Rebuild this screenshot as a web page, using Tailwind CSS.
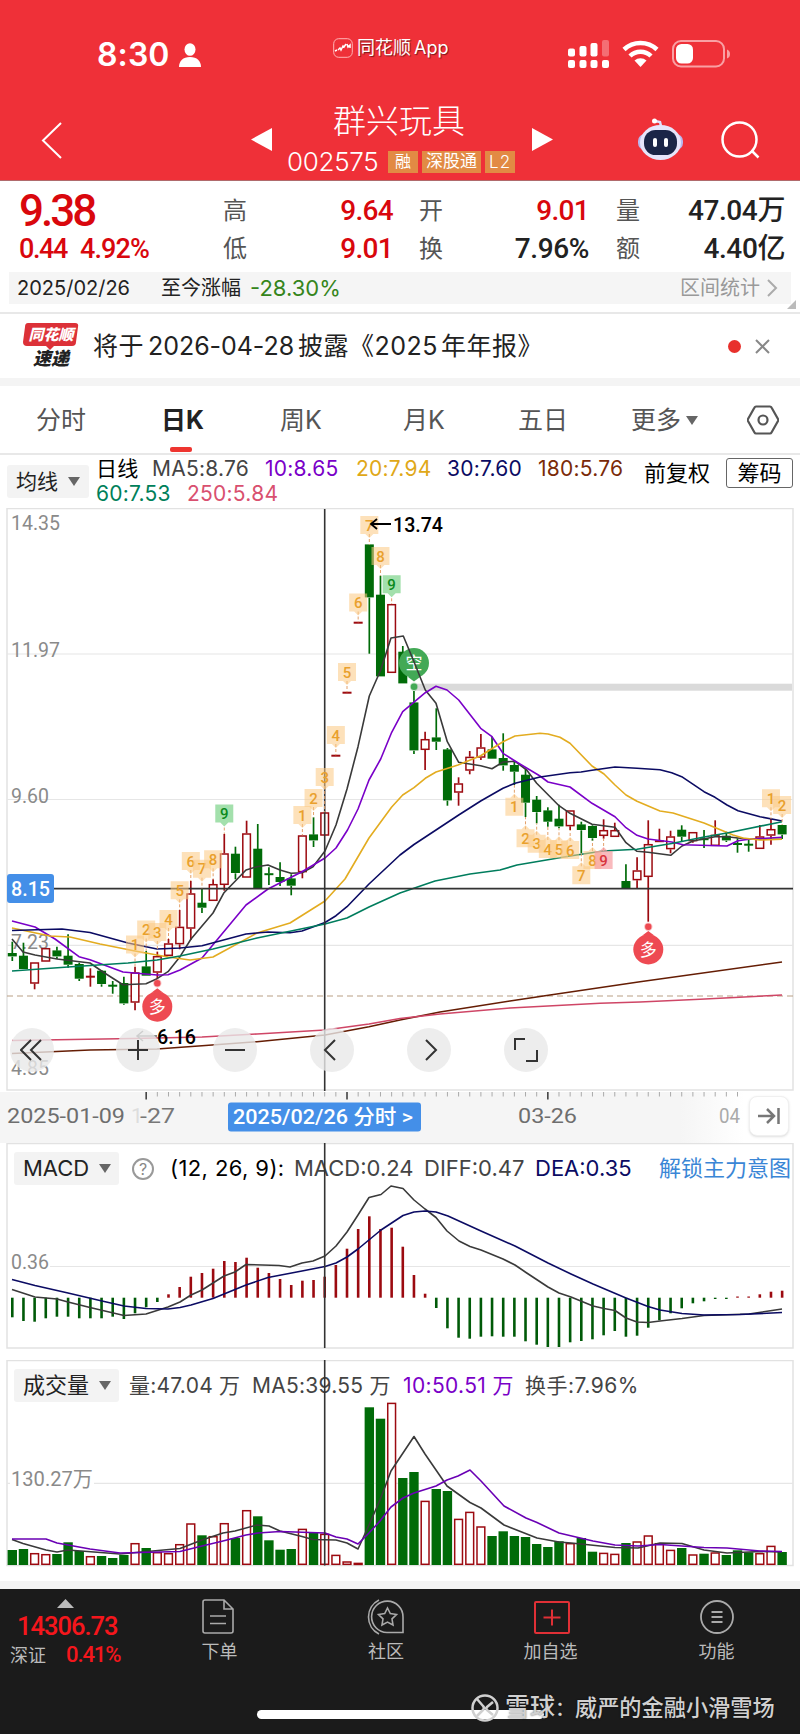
<!doctype html>
<html lang="zh-CN">
    <head>
        <meta charset="UTF-8" />
        <meta name="viewport" content="width=device-width, initial-scale=1.0" />
        <title>群兴玩具 002575</title>
        <script src="https://cdn.jsdelivr.net/npm/@tailwindcss/browser@4"></script>
    </head>
    <body class="w-[800px] h-[1734px] overflow-hidden bg-white text-[#222] font-['Inter','Noto_Sans_CJK_SC',sans-serif] whitespace-nowrap">
        <header class="h-[181px] bg-[#ef3038] text-white border-b border-[#b06a6c]">
            <!-- Status bar -->
            <div class="h-[94px] flex items-start pl-[97px] pt-[36px]">
                <span class="w-[72px] mt-px text-[32px] leading-9 font-semibold tracking-[0.1px]">8:30</span>
                <svg class="ml-[10px] mt-[7px] w-[22px] h-[25px]" viewBox="0 0 22 25" fill="currentColor">
                    <ellipse cx="11" cy="6.5" rx="5.5" ry="6.3" />
                    <path d="M0 24c0-6 4-10 11-10s11 4 11 10z" />
                </svg>
                <div class="ml-[132px] w-[235px] flex items-center gap-1 h-[22px] mt-px">
                    <svg class="w-5 h-5" viewBox="0 0 20 20" fill="none" stroke="currentColor">
                        <rect x=".7" y=".7" width="18.6" height="18.6" rx="5" stroke="#ffb3b5" />
                        <path d="M2 13l2-1M5 12l2-2 1 2 2-4 1 1 2-3M14 6l1 3 2-2v3" stroke-width="1.5" />
                    </svg>
                    <span class="flex gap-[3px] text-[18px] leading-[22px] [text-shadow:1px_1px_1px_rgba(0,0,0,0.5)]"><span>同花顺</span><span>App</span></span>
                </div>
                <svg class="mt-1 w-[42px] h-[29px]" viewBox="0 0 42 29" fill="currentColor">
                    <rect x="0" y="8.500" width="7" height="8" rx="2" />
                    <rect x="11.500" y="6" width="7" height="10.500" rx="2" />
                    <rect x="22.500" y="3" width="7" height="13.500" rx="2" />
                    <rect x="34" y="0" width="7" height="16.500" rx="2" opacity=".3" />
                    <rect x="0" y="20" width="7" height="8" rx="2" />
                    <rect x="11.500" y="20" width="7" height="8" rx="2" />
                    <rect x="22.500" y="20" width="7" height="8" rx="2" />
                    <rect x="34" y="20" width="7" height="8" rx="2" />
                </svg>
                <svg class="ml-3 mt-1 w-[37px] h-[27px]" viewBox="0 0 37 27" fill="none" stroke="currentColor" stroke-width="4.500">
                    <path d="M2 9.500a24 24 0 0 1 33 0" />
                    <path d="M8 16a15 15 0 0 1 21 0" />
                    <path d="M18.500 27l-6-6.500a9 9 0 0 1 12 0z" fill="currentColor" stroke="none" />
                </svg>
                <svg class="ml-[13px] mt-1 w-[59px] h-[28px]" viewBox="0 0 59 28" fill="none">
                    <rect x="1" y="1" width="51" height="25.500" rx="8" stroke="#f9a0a4" stroke-width="2" />
                    <rect x="4" y="4" width="17" height="19.500" rx="5.500" fill="#fff" />
                    <path d="M55 9.500q3 1 3 4.500t-3 4.500z" fill="#f9a0a4" />
                </svg>
            </div>
            <!-- Title bar -->
            <div class="flex items-start pl-[41px]">
                <svg class="mt-[28px] w-[21px] h-[37px]" viewBox="0 0 21 37" fill="none" stroke="currentColor" stroke-width="2">
                    <path d="M20 1L2 18.500 20 36" />
                </svg>
                <svg class="ml-[189px] mt-[34px] w-[21px] h-[23px]" viewBox="0 0 21 23" fill="currentColor"><path d="M21 0v23L0 11.500z" /></svg>
                <div class="ml-[13px] w-[230px] flex flex-col">
                    <h1 class="ml-[48px] mt-[6px] text-[33px] leading-[42px] font-light">群兴玩具</h1>
                    <div class="ml-[2px] mt-[7px] flex items-center h-[26px] gap-1">
                        <span class="w-[98px] text-[26px] leading-[26px] font-light tracking-[-0.3px]">002575</span>
                        <span class="w-[30px] h-[22px] bg-[#e28a44] text-center text-[16px] leading-[21px]">融</span>
                        <span class="w-[60px] h-[22px] bg-[#e28a44] text-center text-[17px] leading-[21px]">深股通</span>
                        <span class="w-[30px] h-[22px] bg-[#e28a44] text-center text-[17px] leading-[22px] font-light tracking-[1px]">L2</span>
                    </div>
                </div>
                <svg class="ml-[17px] mt-[34px] w-[21px] h-[23px]" viewBox="0 0 21 23" fill="currentColor"><path d="M0 0v23l21-11.500z" /></svg>
                <svg class="ml-[85px] mt-[24px] w-[45px] h-[43px]" viewBox="0 0 45 43">
                    <path d="M23 8l-1-4-5-1" stroke="#dfe0ff" stroke-width="2.500" fill="none" />
                    <circle cx="16.500" cy="3" r="2.500" fill="#fff" />
                    <rect x="0" y="16" width="45" height="16" rx="7" fill="#b9b8ee" />
                    <ellipse cx="22.500" cy="24.500" rx="20.500" ry="17.500" fill="#e6e5fb" />
                    <rect x="6" y="12" width="33" height="25" rx="11.500" fill="#1b2547" />
                    <rect x="15" y="20" width="4" height="9" rx="2" fill="#fff" />
                    <rect x="26" y="20" width="4" height="9" rx="2" fill="#fff" />
                </svg>
                <svg class="ml-[38px] mt-[27px] w-[39px] h-[38px]" viewBox="0 0 39 38" fill="none" stroke="currentColor" stroke-width="2.500">
                    <circle cx="18.500" cy="18.500" r="17" />
                    <path d="M30.500 29.500l7 7" />
                </svg>
            </div>
        </header>

        <!-- Quote -->
        <section class="h-[91px] flex text-[24px] leading-[38px] pt-[11px]">
            <div class="w-[203px] pl-[19px] -mt-[4px] text-[#d9070d] font-['Roboto'] font-medium">
                <div class="text-[44px] leading-[46px] tracking-[-3px]">9.38</div>
                <div class="flex text-[27px] leading-[30px] tracking-[-0.9px]"><span class="w-[61px] tracking-[-1.4px]">0.44</span><span>4.92%</span></div>
            </div>
            <div class="w-[190px] pl-[20px] text-[#555]">
                <div class="flex justify-between"><span>高</span><b class="text-[#d9070d] font-['Roboto'] text-[28px] font-medium tracking-[-0.7px]">9.64</b></div>
                <div class="flex justify-between"><span>低</span><b class="text-[#d9070d] font-['Roboto'] text-[28px] font-medium tracking-[-0.7px]">9.01</b></div>
            </div>
            <div class="w-[196px] pl-[26px] text-[#555]">
                <div class="flex justify-between"><span>开</span><b class="text-[#d9070d] font-['Roboto'] text-[28px] font-medium tracking-[-0.7px]">9.01</b></div>
                <div class="flex justify-between"><span>换</span><b class="text-[#222] font-['Roboto'] text-[28px] font-medium tracking-[-0.4px]">7.96%</b></div>
            </div>
            <div class="w-[196px] pl-[27px] text-[#555]">
                <div class="flex justify-between"><span>量</span><b class="text-[#222] font-['Roboto','Noto_Sans_CJK_SC'] text-[28px] font-medium tracking-[-0.4px]">47.04万</b></div>
                <div class="flex justify-between"><span>额</span><b class="text-[#222] font-['Roboto','Noto_Sans_CJK_SC'] text-[28px] font-medium tracking-[-0.4px]">4.40亿</b></div>
            </div>
        </section>
        <div class="relative h-[42px] px-[9px] border-b-2 border-[#e8e8e8]">
            <div class="h-8 bg-[#f5f5f5] flex items-center pl-[8px] pr-[13px] text-[20px] leading-8">
                <span class="w-[144px] text-[20px]">2025/02/26</span>
                <span class="w-[89px]">至今涨幅</span>
                <span class="text-[#35851c] text-[22px]">-28.30%</span>
                <span class="ml-auto text-[#999]">区间统计</span>
                <svg class="ml-[7px] w-[11px] h-[18px]" viewBox="0 0 11 18" fill="none" stroke="#aaa" stroke-width="2"><path d="M1 1l8 8-8 8" /></svg>
            </div>
            <svg class="absolute right-1 top-[28px] w-[9px] h-[9px]" viewBox="0 0 9 9" fill="#bbb"><path d="M9 0v9H0z" /></svg>
        </div>

        <!-- News -->
        <section class="h-[64px] flex items-center pl-[23px]">
            <div class="w-[56px] h-[46px] relative italic font-black text-center">
                <svg class="absolute inset-0 w-[56px] h-[28px]" viewBox="0 0 56 28" fill="#dc3138"><path d="M5 0h47q4 0 3 4l-2 15q0 4-4 4H31l-4 4-4-4H4q-4 0-4-4l2-15q0-4 3-4z" /></svg>
                <div class="relative text-white text-[15px] leading-[23px]">同花顺</div>
                <div class="relative text-[#222] text-[18px] leading-[26px]">速递</div>
            </div>
            <p class="ml-[14px] text-[25px] leading-9 tracking-[0.5px]">将于<span class="mx-1 tracking-[-0.05px]">2026-04-28</span>披露《2025<span class="ml-[3px]">年年报》</span></p>
            <i class="ml-auto w-[13px] h-[13px] rounded-full bg-[#e8302c]"></i>
            <svg class="ml-[14px] mr-[30px] w-[15px] h-[15px]" viewBox="0 0 15 15" stroke="#888" stroke-width="2"><path d="M1 1l13 13M14 1L1 14" /></svg>
        </section>
        <div class="h-2 bg-[#f4f4f4]"></div>

        <!-- Period tabs -->
        <nav class="h-[69px] flex text-[25px] leading-[69px] text-[#555] border-b-2 border-[#e8e8e8] pl-[36px]">
            <span class="w-[125px]">分时</span>
            <span class="relative w-[119px] font-bold text-[#222]">日K<i class="absolute left-[9px] bottom-px w-[22px] h-[5px] rounded-[2px] bg-[#ee3530]"></i></span>
            <span class="w-[123px]">周K</span>
            <span class="w-[115px]">月K</span>
            <span class="w-[113px]">五日</span>
            <span class="w-[55px]">更多</span>
            <svg class="mt-[30px] w-[12px] h-[9px]" viewBox="0 0 12 9" fill="#666"><path d="M0 0h12L6 9z" /></svg>
            <svg class="ml-[49px] mt-[19px] w-[32px] h-[30px]" viewBox="0 0 32 30" fill="none" stroke="#555" stroke-width="2.200">
                <path d="M9 1.500h14q1 0 1.500 1L31 14q.5 1 0 2l-6.500 11.500q-.5 1-1.500 1H9q-1 0-1.500-1L1 16q-.5-1 0-2L7.500 2.500q.5-1 1.500-1z" />
                <circle cx="16" cy="15" r="4.500" />
            </svg>
        </nav>

        <!-- MA legend -->
        <section class="h-[53px] flex pl-[7px] text-[21px] leading-[25px]">
            <div class="mt-[10px] w-[82px] h-[33px] bg-[#f3f3f3] rounded-[3px] flex items-center pl-[9px] text-[21px]">
                均线<svg class="ml-[10px] w-[12px] h-[9px]" viewBox="0 0 12 9" fill="#666"><path d="M0 0h12L6 9z" /></svg>
            </div>
            <div class="ml-[7px] w-[548px] mt-[1px] tracking-[0.25px]">
                <div class="flex">
                    <span class="w-[56px] text-black">日线</span>
                    <span class="w-[113px] text-[#444]">MA5:8.76</span>
                    <span class="w-[91px] text-[#7a00c8]">10:8.65</span>
                    <span class="w-[91px] text-[#e0a818]">20:7.94</span>
                    <span class="w-[91px] text-[#0b0b63]">30:7.60</span>
                    <span class="text-[#7a2a08]">180:5.76</span>
                </div>
                <div class="flex">
                    <span class="w-[91px] text-[#00805a]">60:7.53</span>
                    <span class="text-[#d9506f]">250:5.84</span>
                </div>
            </div>
            <span class="mt-[6px] text-[22px] text-black">前复权</span>
            <span class="ml-auto mr-[7px] mt-[3px] w-[67px] h-[30px] border border-[#666] rounded-[3px] text-center text-[22px] leading-[28px] text-black">筹码</span>
        </section>

        <!-- K line -->
        <section class="relative h-[584px]">
            <svg id="kline" class="block w-[800px] h-[584px]" viewBox="0 508 800 584" font-family="Roboto, 'Noto Sans CJK SC', sans-serif"></svg>
            <div class="absolute left-[10px] top-[520px] flex gap-[53px]">
                <button class="mr-[9px] size-11 rounded-full bg-[#e8e8e8]/80 flex items-center justify-center">
                    <svg class="size-6" viewBox="0 0 24 24" fill="none" stroke="#333" stroke-width="2"><path d="M11 2L1 12l10 10M21 2L11 12l10 10" /></svg>
                </button>
                <button class="size-11 rounded-full bg-[#e8e8e8]/80 flex items-center justify-center">
                    <svg class="size-6" viewBox="0 0 24 24" fill="none" stroke="#333" stroke-width="2"><path d="M12 2v20M2 12h20" /></svg>
                </button>
                <button class="size-11 rounded-full bg-[#e8e8e8]/80 flex items-center justify-center">
                    <svg class="size-6" viewBox="0 0 24 24" fill="none" stroke="#333" stroke-width="2"><path d="M2 12h20" /></svg>
                </button>
                <button class="size-11 rounded-full bg-[#e8e8e8]/80 flex items-center justify-center">
                    <svg class="size-6" viewBox="0 0 24 24" fill="none" stroke="#333" stroke-width="2"><path d="M15 2L5 12l10 10" /></svg>
                </button>
                <button class="size-11 rounded-full bg-[#e8e8e8]/80 flex items-center justify-center">
                    <svg class="size-6" viewBox="0 0 24 24" fill="none" stroke="#333" stroke-width="2"><path d="M9 2l10 10L9 22" /></svg>
                </button>
                <button class="size-11 rounded-full bg-[#e8e8e8]/80 flex items-center justify-center">
                    <svg class="size-6" viewBox="0 0 24 24" fill="none" stroke="#333" stroke-width="2"><path d="M1 12V1h10M23 12v11H12" /></svg>
                </button>
            </div>
        </section>

        <!-- Date axis -->
        <section class="relative h-[51px]">
            <svg id="axis" class="block w-[800px] h-[51px]" viewBox="0 1092 800 51" font-family="Roboto, 'Noto Sans CJK SC', sans-serif"></svg>
            <button class="absolute left-[749px] top-[4px] w-[40px] h-[40px] bg-white rounded-lg border border-[#f0f0f0] shadow-sm flex items-center justify-center">
                <svg class="w-[22px] h-[18px]" viewBox="0 0 22 18" fill="none" stroke="#777" stroke-width="2.500"><path d="M0 9h16M9 2l7 7-7 7M20.500 1v16" /></svg>
            </button>
        </section>

        <!-- MACD -->
        <section class="relative h-[217px]">
            <div class="absolute left-0 top-0 flex items-center pl-[14px] pt-[9px] text-[22px] leading-[33px]">
                <div class="w-[105px] h-[33px] bg-[#f3f3f3] rounded-[3px] flex items-center pl-[9px] text-[22px]">
                    MACD<svg class="ml-[10px] w-[12px] h-[9px]" viewBox="0 0 12 9" fill="#666"><path d="M0 0h12L6 9z" /></svg>
                </div>
                <i class="ml-[13px] w-[22px] h-[22px] rounded-full border-2 border-[#999] not-italic text-center text-[16px] leading-[18px] text-[#888]">?</i>
                <span class="ml-[16px] w-[124px] text-black tracking-[0.4px]">(12, 26, 9):</span>
                <span class="w-[130px] text-[#444]">MACD:0.24</span>
                <span class="w-[111px] text-[#444]">DIFF:0.47</span>
                <span class="w-[124px] text-[#0b0b63]">DEA:0.35</span>
                <span class="text-[#3a86d6]">解锁主力意图</span>
            </div>
            <svg id="macd" class="relative block w-[800px] h-[217px]" viewBox="0 1143 800 217" font-family="Roboto, sans-serif"></svg>
        </section>

        <!-- Volume -->
        <section class="relative h-[221px]">
            <div class="absolute left-0 top-0 flex items-center pl-[14px] pt-[9px] text-[21px] leading-[33px] text-[#444]">
                <div class="w-[105px] h-[33px] bg-[#f3f3f3] rounded-[3px] flex items-center pl-[9px] text-[22px] text-[#222]">
                    成交量<svg class="ml-[10px] w-[12px] h-[9px]" viewBox="0 0 12 9" fill="#666"><path d="M0 0h12L6 9z" /></svg>
                </div>
                <span class="ml-[10px] w-[123px] tracking-[0.25px]">量:47.04 万</span>
                <span class="w-[151px] tracking-[0.25px]">MA5:39.55 万</span>
                <span class="w-[122px] tracking-[0.35px] text-[#7a00c8]">10:50.51 万</span>
                <span class="tracking-[0.5px]">换手:7.96%</span>
            </div>
            <svg id="volume" class="relative block w-[800px] h-[221px]" viewBox="0 1360 800 221" font-family="Roboto, 'Noto Sans CJK SC', sans-serif"></svg>
        </section>
        <div class="h-2 bg-[#f4f4f4]"></div>

        <!-- Tab bar -->
        <footer class="relative h-[145px] bg-[#1b1b1b] text-[#bbb] text-[18px] leading-6">
            <div class="flex h-[90px]">
                <div class="w-[137px] pt-[10px]">
                    <svg class="ml-[57px] w-[17px] h-[9px]" viewBox="0 0 17 9" fill="#bbb"><path d="M8.500 0L17 9H0z" /></svg>
                    <div class="ml-[17px] mt-[4px] font-['Roboto'] font-medium text-[25.500px] leading-[29px] text-[#f5161c] tracking-[-1px]">14306.73</div>
                    <div class="ml-[10px] flex"><span class="w-[56px] mt-[3px]">深证</span><span class="mt-[2px] font-['Roboto'] font-medium text-[22px] text-[#f5161c] tracking-[-1.1px]">0.41%</span></div>
                </div>
                <div class="w-[162px] flex flex-col items-center pt-[10px]">
                    <svg class="w-[32px] h-[35px]" viewBox="0 0 32 35" fill="none" stroke="#aaa" stroke-width="1.600"><path d="M22 1H3q-2 0-2 2v29q0 2 2 2h26q2 0 2-2V10zM22 1v9h9M8 17h16M8 24.500h16" /></svg>
                    <span class="mt-[6px] ml-[3px]">下单</span>
                </div>
                <div class="w-[172px] flex flex-col items-center pt-[10px]">
                    <svg class="w-[40px] h-[36px]" viewBox="0 0 40 36" fill="none" stroke="#aaa" stroke-width="1.600">
                        <path d="M38 33.500H22a15.700 15.700 0 1 1 16-15.500zM14 1a19 19 0 0 0 0 34" />
                        <path d="M22.500 9l2.800 5.600 6.200.9-4.500 4.400 1 6.100-5.500-2.900-5.500 2.900 1-6.100-4.500-4.400 6.200-.9z" />
                    </svg>
                    <span class="mt-[5px] ml-[2px]">社区</span>
                </div>
                <div class="w-[162px] flex flex-col items-center pt-[11px]">
                    <svg class="w-[36px] h-[34px]" viewBox="0 0 36 34" fill="none" stroke="#e03036" stroke-width="2"><rect x="1" y="2" width="34" height="31" rx="1" /><path d="M18 9.500v16M9.500 17.500h17" /></svg>
                    <span class="mt-[6px] -ml-[3px]">加自选</span>
                </div>
                <div class="w-[167px] flex flex-col items-center pt-[10px]">
                    <svg class="w-[36px] h-[36px]" viewBox="0 0 36 36" fill="none" stroke="#aaa" stroke-width="1.800"><circle cx="18" cy="18" r="16" /><path d="M12.500 13h11M12.500 18h11M12.500 23h11" /></svg>
                    <span class="mt-[5px]">功能</span>
                </div>
            </div>
            <i class="absolute left-[257px] top-[121px] w-[287px] h-[9px] rounded-full bg-white"></i>
            <div class="absolute left-[471px] top-[104px] flex items-center text-[22.200px] leading-[28px] font-medium text-[#d0d0d0] [text-shadow:0_0_2px_rgba(0,0,0,0.6)]">
                <svg class="w-[28px] h-[28px] mr-[6px]" viewBox="0 0 28 28" fill="none" stroke="#d0d0d0" stroke-width="2.500"><circle cx="14" cy="14" r="12.500" /><path d="M6 5l6 7q2 2 0 4l-6 6M22 8l-6 5q-1.500 1.500 0 3l6 5" /></svg>
                <span class="w-[70px] text-[25px]">雪球<span class="text-[20px]">：</span></span><span>威严的金融小滑雪场</span>
            </div>
        </footer>

        <script>
            const X0 = 12.3;
            const STEP = 11.157;
            const RED = '#9c0a10';
            const GREEN = '#006b08';
            const x = (i) => X0 + i * STEP;

            // r/g, high, body top, body bottom, low
            const candles = [
                ['g', 941.7, 953.3, 956.7, 961], ['g', 942.7, 956, 969.3, 969.3], ['r', 962.3, 962.3, 983.7, 989.3], ['r', 948, 948, 961.7, 961.7],
                ['g', 946.7, 950.7, 956.7, 959], ['g', 934.3, 956, 965, 967.7], ['g', 962.7, 964.3, 979, 981], ['r', 968.3, 976, 976.7, 986.7],
                ['g', 970, 971, 984.3, 986.7], ['g', 981, 985, 986, 993.7], ['g', 976.7, 983.3, 1003.7, 1004.7], ['r', 966.7, 972.3, 1002.7, 1010.3],
                ['g', 951, 966.7, 976, 976], ['r', 951.7, 956, 972.7, 978.7], ['r', 939, 943.3, 956, 956], ['r', 910, 926.7, 944.3, 949.3],
                ['r', 881, 893.3, 928.7, 940], ['g', 888.3, 903, 908, 913], ['r', 879.3, 884, 901, 901], ['r', 834, 853.3, 885, 890.7],
                ['g', 846.7, 854, 873.3, 879.3], ['r', 820.7, 833.3, 877.7, 877.7], ['g', 824, 849, 889.3, 889.3], ['g', 867.3, 873.5, 875, 885],
                ['g', 862.3, 877.3, 882.3, 886], ['g', 874.3, 878.7, 886, 895.3], ['r', 835.3, 835.3, 872.3, 878.3], ['g', 817.3, 834.7, 840.7, 847],
                ['r', 812.3, 812.3, 835.7, 835.7], ['r', 755.3, 755, 756, 755.3], ['r', 692.3, 692, 693, 692.3], ['r', 622.3, 622, 623, 622.3],
                ['g', 544.7, 544.7, 597.7, 653.7], ['g', 575.7, 595, 676.7, 676.7], ['r', 604, 604, 673, 673], ['g', 646, 652, 683.7, 683.7],
                ['g', 691, 702.7, 750.7, 754], ['r', 731.7, 739, 750, 770], ['g', 708.3, 737.7, 742, 750], ['g', 748, 749.7, 800.7, 805.7],
                ['r', 777.3, 783.3, 792.7, 805.7], ['r', 751, 756.7, 770.7, 774.3], ['r', 734, 747.3, 757.7, 760], ['g', 736.7, 749.7, 759, 759],
                ['g', 733.3, 758.3, 765.7, 770.7], ['g', 760.7, 765.3, 772, 785], ['g', 769.3, 775, 803, 817], ['g', 796, 800, 812.3, 823.3],
                ['g', 807.3, 810.7, 822, 826.7], ['g', 804.7, 819, 826.7, 828.3], ['r', 810.3, 810.3, 826.3, 830], ['g', 821.7, 824.7, 830.3, 853.3],
                ['g', 825.3, 826.3, 838.3, 840.7], ['r', 819.3, 830, 836, 838.7], ['r', 822.7, 830, 837, 837], ['g', 864.3, 881.3, 888.3, 888.3],
                ['r', 857.3, 870.3, 880.3, 888.3], ['r', 820.3, 844, 877, 921.7], ['r', 828.7, 840.5, 841.5, 841.3], ['r', 830.7, 836.3, 849.3, 853.3],
                ['g', 825.3, 830, 837, 842], ['r', 832, 832, 841.3, 842.7], ['g', 830, 838.5, 840, 848], ['r', 820.3, 834.7, 846, 846],
                ['g', 831.7, 836, 840.7, 842], ['g', 838.3, 843.3, 844, 852.7], ['g', 838.3, 844, 845.3, 851.7], ['r', 825, 836.3, 849, 849],
                ['r', 819, 829, 835.7, 844.7], ['g', 825, 825.3, 834.7, 839],
            ];

            const maLines = [
                ['#3a3a3a', '12,939 23,952 35,955 57,959 90,963 103,972 123,984.700 146,983.700 157,978.700 168,971.700 180,956.700 191,939 213,913 224,892.700 246,870 257,866.700 268,865 280,870 291,873.300 302,872.700 313,866.700 325,851 336,825 347,789 358,746.700 369.300,696 380.700,670 391,638 403.300,636 414,661.700 425.300,690 436,703.300 447.300,741.700 458.700,762.300 480.700,765.700 492,768.700 503,762 515,761.300 526.700,770 536.700,783.300 559,805.700 570,813.300 592,824.300 615,827.300 626,842.700 637,851.300 648,852.300 670.700,855.300 682,846 693,841 715,836.700 727,836.700 749,839.300 782,839.300'],
                ['#7a00c8', '12,921 35,927 55,939 79,956.700 90,959.700 123,972 157,975 168,974.700 180,970 202,958 246,905 268,889 302,871.700 325,858 336,848 347.500,830 358,809 369,780 380.700,759 391.700,732.300 402.700,711.700 425.300,692.700 436,686.300 447,690 458.700,700 480.700,728.300 492,736.700 503,753.300 515,761 540,776 548,782 570,787 592,803.300 615,816.700 626,827.700 637,835.300 648,839 671.700,842 683,844.700 727,846 738,840.700 749,839.300 782,837.300'],
                ['#e3ac20', '12,928 50,936 70,937 100,944 135,951 168,957 190,960 213,957 257,933 290,923 325,901 345,879 369,838 391.700,807 402.700,795 414,787.700 425.300,778.300 436,772 458,765 480.700,755.700 503,741.700 515,736 540,733.300 548,734 560,737.300 570,743.300 592,766 604,774 615,785 626,795 637,801.300 660,811 673,813 704,823 733,835 743,838 760,840 782,839.300'],
                ['#0b0b63', '12,930.500 62,929 90,932.500 128,943 157,949 180,948 202,945.700 246,934 268,932 290,932.700 302,931 325,922.500 336,915.700 347,906.700 369,884 400,855 414,844.500 436,830 458.700,815 480.700,801 503,788.300 515,783.300 540,777 570,772.700 581,772 592,770.300 615,767 637,768.300 660,769.700 671.700,772.700 681.700,776.700 704,791.700 715,797.300 727,805 738,810.700 760,816.700 782,821'],
                ['#007d5d', '12,971 68,967 128,963 157,960 180,956 213,949 257,938 302,928.700 325,924 347,918 369,907 400,893 435,881 470,874 500,870 517,865 570,856 603,851 637,849.300 671.700,843.500 704,837 727,833 782,821.700'],
                ['#651d04', '12,1053.500 90,1050 157,1049 202,1045.700 257,1041.700 325,1035 369,1026.700 400,1020 440,1012 510,1001 550,995 640,981.700 782,962'],
                ['#cf4666', '12,1040.500 133,1038.500 202,1037 257,1034 325,1030 369,1024 400,1018.500 440,1014 510,1008 600,1003.300 640,1002 700,999.300 782,995'],
            ];

            // number, candle index, box centre, -1 above / 1 below, kind
            const tags = [
                [1, 11, 944.5, -1, 'o'], [2, 12, 929.5, -1, 'o'], [3, 13, 932, -1, 'o'], [4, 14, 919, -1, 'o'], [5, 15, 890.3, -1, 'o'], [6, 16, 861, -1, 'o'],
                [7, 17, 868.7, -1, 'o'], [8, 18, 859.3, -1, 'o'], [9, 19, 813.5, -1, 'g'], [1, 26, 815, -1, 'o'], [2, 27, 798, -1, 'o'], [3, 28, 777, -1, 'o'],
                [4, 29, 735, -1, 'o'], [5, 30, 672, -1, 'o'], [6, 31, 602.5, -1, 'o'], [7, 32, 525, -1, 'o'], [8, 33, 556, -1, 'o'], [9, 34, 584.3, -1, 'g'],
                [1, 45, 806.7, 1, 'o'], [2, 46, 838.3, 1, 'o'], [3, 47, 843.7, 1, 'o'], [4, 48, 849, 1, 'o'], [5, 49, 849.3, 1, 'o'], [6, 50, 850, 1, 'o'],
                [7, 51, 875.3, 1, 'o'], [8, 52, 860, 1, 'o'], [9, 53, 860, 1, 'r'], [1, 68, 798.3, -1, 'o'], [2, 69, 805, -1, 'o'],
            ];
            const tagColors = { o: ['#fbc98590', '#e9a02c'], g: ['#a3e0ac', '#0b8a1c'], r: ['#f79ba0b0', '#d8343c'] };

            const line = (x1, y1, x2, y2, c, w = 1, extra = '') =>
                `<line x1="${x1}" y1="${y1}" x2="${x2}" y2="${y2}" stroke="${c}" stroke-width="${w}" ${extra}/>`;
            const poly = (c, pts, w = 1.6) => `<polyline points="${pts}" fill="none" stroke="${c}" stroke-width="${w}" stroke-linejoin="round"/>`;
            const text = (s, tx, ty, size, c, len, extra = '') =>
                `<text x="${tx}" y="${ty}" font-size="${size}" fill="${c}" ${len ? `textLength="${len}" lengthAdjust="spacingAndGlyphs"` : ''} ${extra}>${s}</text>`;

            function pin(cx, dotY, cy, color, label, dir) {
                const edge = cy + dir * -14;
                return `<circle cx="${cx}" cy="${dotY}" r="3.2" fill="${color}" stroke="${color}55" stroke-width="2"/>
                    <path d="M${cx - 6} ${edge}L${cx} ${edge - dir * 4.5}L${cx + 6} ${edge}z" fill="${color}"/>
                    <circle cx="${cx}" cy="${cy}" r="15" fill="${color}"/>
                    ${text(label, cx, cy + 6, 17, '#fff', 0, 'text-anchor="middle"')}`;
            }

            function drawKline() {
                let s = '<rect x="7" y="508.500" width="786" height="581.500" fill="#fff" stroke="#e2e2e2" stroke-width="1.500"/>';
                [654, 799.5, 945.3].forEach((y) => (s += line(7, y, 793, y, '#e6e6e6', 1.2)));
                s += '<rect x="415" y="683.700" width="377" height="7" fill="#dadada"/>';
                s += line(7, 996, 793, 996, '#b99f84', 1, 'stroke-dasharray="6 4"');
                [['14.35', 530], ['11.97', 657], ['9.60', 802.5], ['7.23', 948.5], ['4.85', 1075]].forEach(([t, y]) => {
                    s += text(t, 11, y, 21, '#8a8a8a', t.length > 4 ? 49 : 38);
                });
                candles.forEach(([k, hi, top, bot, lo], i) => {
                    const cx = x(i);
                    const c = k === 'r' ? RED : GREEN;
                    if (hi < top) s += line(cx, hi, cx, top, c, 1.7);
                    if (lo > bot) s += line(cx, bot, cx, lo, c, 1.7);
                    if (k === 'g' || bot - top < 3) s += `<rect x="${cx - 4.5}" y="${top - 0.3}" width="9" height="${Math.max(2, bot - top)}" fill="${c}"/>`;
                    else s += `<rect x="${cx - 3.8}" y="${top + 0.7}" width="7.6" height="${bot - top - 1.4}" fill="#fff" stroke="${c}" stroke-width="1.5"/>`;
                });
                s += pin(414, 686.7, 663, '#43a956', '空', -1);
                maLines.forEach(([c, pts]) => (s += poly(c, pts)));
                s += line(324.7, 509, 324.7, 1091, '#333', 1.6) + line(7, 888.6, 793, 888.6, '#333', 1.6);
                tags.forEach(([n, i, cy, dir, kind]) => {
                    const cx = x(i);
                    const [bg, fg] = tagColors[kind];
                    const edge = cy - dir * 9;
                    const target = dir < 0 ? candles[i][1] : candles[i][4];
                    s += line(cx, edge, cx, target, '#e3a06a', 1, 'stroke-dasharray="3 2"');
                    s += `<path d="M${cx - 9} ${cy - 9}h18v18h-18zM${cx - 4} ${edge}l4 ${-dir * 4}l4 ${dir * 4}z" fill="${bg}"/>`;
                    s += text(n, cx, cy + 5.5, 15, fg, 0, 'text-anchor="middle" font-weight="500"');
                });
                s += pin(157.3, 983.3, 1006.7, '#ee4a52', '多', 1) + pin(648.3, 926.7, 949.5, '#ee4a52', '多', 1);
                s += '<path d="M391 524h-20m6-5l-6 5 6 5" fill="none" stroke="#000" stroke-width="1.800"/>' + text('13.74', 393, 531.5, 21, '#000', 50, 'font-weight="500"');
                s += '<path d="M157 1036h-20m6-5l-6 5 6 5" fill="none" stroke="#666" stroke-width="1.500"/>' + text('6.16', 157, 1043.5, 21, '#000', 39, 'font-weight="500"');
                s += '<rect x="7" y="874" width="47" height="29" rx="3" fill="#448fe8"/>' + text('8.15', 11, 895.5, 21, '#fff', 39, 'font-weight="500"');
                document.getElementById('kline').innerHTML = s;
            }

            function drawAxis() {
                let s = '<defs><linearGradient id="fade"><stop offset="0" stop-color="#f5f5f5"/><stop offset=".85" stop-color="#f5f5f5"/><stop offset=".93" stop-color="#fff"/></linearGradient></defs>';
                s += '<rect x="0" y="1090" width="800" height="53" fill="url(#fade)"/>';
                for (let i = 12; i <= 65; i++) {
                    const major = i === 12 || i === 30 || i === 48;
                    s += line(x(i), 1092, x(i), major ? 1099.5 : 1096.5, major ? '#444' : '#aaa', major ? 1.6 : 1);
                }
                s += text('2025-01-09', 7, 1123, 21, '#6e6e6e', 118);
                s += text('1', 131, 1123, 21, '#ddd') + text('-27', 140, 1123, 21, '#777', 35);
                s += '<rect x="228" y="1102.500" width="193" height="29" rx="3" fill="#448fe8"/>' + text('2025/02/26 分时 &gt;', 233, 1124, 21, '#fff', 180, 'font-weight="500"');
                s += text('03-26', 518, 1123, 21, '#6e6e6e', 59) + text('04', 719, 1123, 21, '#aaa', 21);
                document.getElementById('axis').innerHTML = s;
            }

            function drawMacd() {
                const ends = [1317.3, 1321, 1321.7, 1318.3, 1316.7, 1316.7, 1318.3, 1318.3, 1318.3, 1316.7, 1319, 1313.3, 1307.3, 1302, 1294.3, 1287, 1276.7, 1273, 1268.7, 1261, 1262, 1257.7, 1267.7, 1273, 1279, 1285, 1280.7, 1280, 1276.7, 1265, 1248.7, 1229, 1216.3, 1229, 1227.7, 1246.7, 1275, 1293.7, 1308, 1328.3, 1337.7, 1338.7, 1336.7, 1336.3, 1336.7, 1336.7, 1341.3, 1344.7, 1347, 1347, 1342.3, 1341, 1339.3, 1335.3, 1331, 1336.7, 1335.7, 1327.7, 1320.3, 1313.3, 1308.3, 1303.3, 1301.3, 1299, 1299, 1296.5, 1296.5, 1294.3, 1291.7, 1290.7];
                let s = '<rect x="7" y="1143.500" width="786" height="204.500" fill="none" stroke="#e2e2e2" stroke-width="1.500"/>';
                s += line(50, 1266.5, 790, 1266.5, '#e6e6e6', 1.2) + text('0.36', 11, 1269, 21, '#8a8a8a', 38);
                ends.forEach((y, i) => {
                    s += line(x(i), 1297.7, x(i), y, y > 1297.7 ? '#005a08' : RED, 2.6);
                });
                s += poly('#3a3a3a', '12,1289.500 35,1297 57,1299 68,1302 90,1307.500 124,1315.500 146,1314 168,1307 180,1302 191,1295 202,1290 224,1276 235,1272 246,1264.500 279,1265.500 290,1267 302,1263 313,1261 325,1256 336,1246 347,1232 358,1215 369,1197.500 381,1194.500 391,1186 403,1188.500 414,1200 425,1209 436,1217.500 447,1231 459,1241 470,1246.500 481,1250 503,1259 515,1265 526,1272.500 548,1287 559,1293 571,1297 593,1306 604,1308.500 615,1310.500 626,1318 637,1322 648,1322.500 660,1321 682,1318.500 704,1315.500 749,1314 782,1309');
                s += poly('#0b0b63', '12,1279.500 35,1285.500 68,1293 102,1301 124,1306 146,1308.500 168,1309 180,1307.500 191,1305 213,1298.500 246,1285 268,1277.500 302,1271 325,1266.500 336,1263 347,1257 358,1249 381,1230 403,1215.500 414,1212 425,1211 436,1212 448,1216 481,1231 515,1246 548,1263 571,1274 593,1284 626,1298 648,1306.500 660,1310 682,1313.500 704,1315 740,1314.500 782,1312.500');
                s += line(324.7, 1143, 324.7, 1348, '#333', 1.6);
                document.getElementById('macd').innerHTML = s;
            }

            function drawVolume() {
                const heights = [15, 16, 12, 11, 11, 22.7, 14, 9, 9, 7, 10, 22, 17, 13, 12, 21, 41.7, 29.7, 29, 42, 27, 55, 48.7, 24.7, 15.3, 16, 36.3, 32.7, 31.3, 10.3, 3.7, 2.3, 157.7, 146.3, 162.3, 87, 93, 64.3, 76, 74, 46.3, 53.3, 38.7, 29, 33.7, 29, 28, 21, 18, 23.7, 22, 27, 13.3, 12.3, 11.3, 22, 23.7, 29.7, 22, 15.3, 17, 10.7, 11.3, 12.7, 10, 14.7, 12.7, 12, 19.3, 13];
                const kinds = 'ggrrgggrgggrgrrrrgrrgrggggrgrrrrggrggrggrrrgggggggrggrrgrrrrgrgrgggrrg';
                let s = '<rect x="7" y="1360.500" width="786" height="205" fill="none" stroke="#e2e2e2" stroke-width="1.500"/>';
                s += line(7, 1483.3, 793, 1483.3, '#e6e6e6', 1.2);
                s += '<rect x="10" y="1470" width="84" height="20" fill="#fff"/>' + text('130.27万', 11, 1486, 21, '#8a8a8a', 82);
                heights.forEach((h, i) => {
                    const cx = x(i);
                    if (kinds[i] === 'g') s += `<rect x="${cx - 4.7}" y="${1565 - h}" width="9.4" height="${h}" fill="${GREEN}"/>`;
                    else s += `<rect x="${cx - 3.9}" y="${1565.7 - h}" width="7.8" height="${Math.max(1, h - 1.4)}" fill="#fff" stroke="${RED}" stroke-width="1.5"/>`;
                });
                s += poly('#3a3a3a', '12,1539.500 23,1543.500 46,1550 57,1552 68,1550 120,1554 180,1548.500 202,1540 223,1533 235,1531 257,1525 269,1526 280,1531 302,1536.500 313,1539.500 336,1540 347,1543 358,1549 369,1525 380,1500 391,1471 403,1453 414,1436.500 425,1454 436,1470 447,1486 470,1502.500 481,1508 504,1525 537,1538 559,1542 571,1543 615,1547.500 638,1548 660,1543 682,1543.500 704,1550 727,1553 760,1551.500 782,1552');
                s += poly('#6a00b4', '12,1539 46,1539 57,1543 90,1549 120,1553 180,1551.500 202,1546 223,1541 246,1535 258,1533 280,1531.500 325,1533 336,1537 347,1539 358,1544 369,1533 380,1521 391,1507 403,1498 414,1493 436,1486 447,1480 458,1476 470,1470 481,1481 504,1506 526,1518 537,1522.500 559,1533 593,1541 615,1545 638,1546 660,1544.500 704,1547.500 727,1548 760,1551 782,1551.500');
                s += line(324.7, 1360, 324.7, 1565.500, '#333', 1.6);
                document.getElementById('volume').innerHTML = s;
            }

            drawKline();
            drawAxis();
            drawMacd();
            drawVolume();
        </script>
    </body>
</html>
